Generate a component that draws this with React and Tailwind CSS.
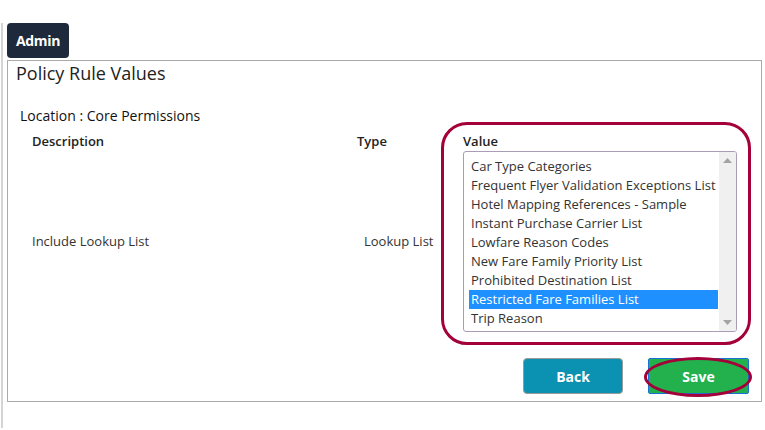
import React from 'react';

// Lookup lists offered for the "Include Lookup List" rule
const LOOKUP_LISTS = [
  'Car Type Categories',
  'Frequent Flyer Validation Exceptions List',
  'Hotel Mapping References - Sample',
  'Instant Purchase Carrier List',
  'Lowfare Reason Codes',
  'New Fare Family Priority List',
  'Prohibited Destination List',
  'Restricted Fare Families List',
  'Trip Reason',
];

const SELECTED = 'Restricted Fare Families List';

const ListBox = () => (
  <div className="flex w-[274px] h-[181px] border border-[#a99cb5] rounded-[3px] bg-white overflow-hidden">
    <div className="flex-1 pt-[5px] pl-[5px] pr-[1px]">
      {LOOKUP_LISTS.map((item) => (
        <div
          key={item}
          className={`h-[19px] leading-[19px] px-[2px] text-[13px] whitespace-nowrap ${
            item === SELECTED ? 'bg-[#1e90ff] text-white' : 'text-[#333]'
          }`}
        >
          {item}
        </div>
      ))}
    </div>
    {/* scrollbar */}
    <div className="w-[17px] bg-[#f0f0f0] flex flex-col items-center justify-between py-[6px]">
      <svg width="9" height="5" viewBox="0 0 9 5"><path d="M0 5 L4.5 0 L9 5 Z" fill="#a3a3a3" /></svg>
      <svg width="9" height="5" viewBox="0 0 9 5"><path d="M0 0 L4.5 5 L9 0 Z" fill="#a3a3a3" /></svg>
    </div>
  </div>
);

export default function App() {
  return (
    <div className="relative w-[765px] h-[430px] bg-white overflow-hidden text-[#333]" style={{ fontFamily: '"Open Sans", sans-serif' }}>
      <div className="ml-px mt-[25px] h-[405px] border-l-2 border-[#d4d4d4] pl-[4px]">
        {/* Tab */}
        <div className="-mt-[2px] w-[62px] h-[35px] rounded-[4px] bg-[#1e2a3b] text-white text-[14px] font-bold flex items-center justify-center tracking-[-0.3px]">
          Admin
        </div>

        {/* Panel */}
        <div className="mt-[2px] w-[755px] h-[342px] border border-[#aaaaaa] flex flex-col">
          <div className="pl-[8px] text-[18px] leading-[25px] text-[#222]">Policy Rule Values</div>

          <div className="pl-[12px] mt-[20px] text-[14px] leading-[20px] text-[#111]">Location : Core Permissions</div>

          <div className="flex mt-[6px] text-[13px]">
            <div className="w-[349px] pl-[24px] flex flex-col">
              <div className="h-[19px] leading-[19px] font-semibold text-[#222]">Description</div>
              <div className="flex-1 flex items-center">Include Lookup List</div>
            </div>
            <div className="w-[106px] flex flex-col">
              <div className="h-[19px] leading-[19px] font-semibold text-[#222]">Type</div>
              <div className="flex-1 flex items-center pl-[7px]">Lookup List</div>
            </div>
            <div className="flex flex-col">
              <div className="h-[19px] leading-[19px] font-semibold text-[#222]">Value</div>
              <ListBox />
            </div>
          </div>

          <div className="flex justify-end gap-[25px] pr-[12px] mt-[26px]">
            <button className="w-[100px] h-[36px] rounded-[4px] border border-[#9a9a9a] bg-[#0b91b1] text-white text-[14px] font-bold">
              Back
            </button>
            <button className="w-[101px] h-[36px] rounded-[2px] border border-[#1c6fd9] bg-[#22b14c] text-white text-[14px] font-bold">
              Save
            </button>
          </div>
        </div>
      </div>

      {/* Annotation outlines */}
      <div className="absolute left-[441px] top-[122px] w-[310px] h-[223px] rounded-[26px] border-[3px] border-[#a4003a] pointer-events-none" />
      <div className="absolute left-[644px] top-[357px] w-[108px] h-[40px] rounded-[50%] border-[3px] border-[#a4003a] pointer-events-none" />
    </div>
  );
}
